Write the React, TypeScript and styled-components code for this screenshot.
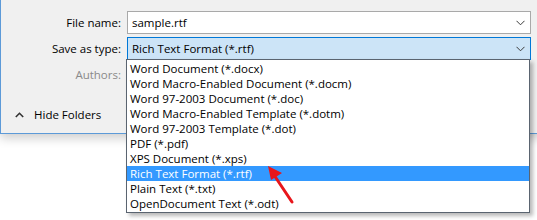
import React from "react"
import styled, { createGlobalStyle } from "styled-components"

const GlobalStyle = createGlobalStyle`
  html, body {
    margin: 0;
    padding: 0;
    background: #ffffff;
  }
  body {
    width: 537px;
    height: 220px;
    overflow: hidden;
    font-family: "Open Sans", "Noto Sans", sans-serif;
    font-size: 11.5px;
    color: #000;
  }
`

const Stage = styled.div`
  position: relative;
  width: 537px;
  height: 220px;
  overflow: hidden;
`

const Dialog = styled.div`
  width: 600px;
  height: 134px;
  background: #f0f0f0;
  border-left: 1px solid #5c9ad8;
  border-bottom: 1px solid #5c9ad8;
  box-shadow: 0 4px 10px rgba(0, 0, 0, 0.2);
  box-sizing: border-box;
  padding-top: 11px;
`

const Form = styled.div`
  display: grid;
  grid-template-columns: 120px 404px;
  column-gap: 6px;
  row-gap: 3px;
  grid-auto-rows: 23px;
`

const Label = styled.div<{ $disabled?: boolean }>`
  display: flex;
  align-items: center;
  justify-content: flex-end;
  color: ${(p) => (p.$disabled ? "#8a8a8a" : "#000")};
`

const Field = styled.div<{ $active?: boolean }>`
  display: flex;
  align-items: center;
  justify-content: space-between;
  box-sizing: border-box;
  height: 23px;
  padding: 0 5px 0 4px;
  border: 1px solid ${(p) => (p.$active ? "#0078d7" : "#a9a9a9")};
  background: ${(p) => (p.$active ? "#cce4f7" : "#ffffff")};
`

const FooterBar = styled.div`
  display: flex;
  align-items: center;
  gap: 10px;
  padding: 21px 0 0 14px;
`

const Chevron = styled.svg`
  display: block;
  flex: none;
`

const List = styled.ul`
  position: absolute;
  top: 59px;
  left: 126px;
  width: 404px;
  margin: 0;
  padding: 1px 0;
  list-style: none;
  box-sizing: border-box;
  background: #ffffff;
  border: 1px solid #5a6470;
  box-shadow: 3px 3px 4px rgba(0, 0, 0, 0.28);
`

const Option = styled.li<{ $selected?: boolean }>`
  height: 15px;
  line-height: 15px;
  padding-left: 3px;
  white-space: nowrap;
  background: ${(p) => (p.$selected ? "#3399ff" : "transparent")};
  color: ${(p) => (p.$selected ? "#ffffff" : "#000000")};
`

const Pointer = styled.svg`
  position: absolute;
  left: 258px;
  top: 158px;
`

const options = [
  "Word Document (*.docx)",
  "Word Macro-Enabled Document (*.docm)",
  "Word 97-2003 Document (*.doc)",
  "Word Macro-Enabled Template (*.dotm)",
  "Word 97-2003 Template (*.dot)",
  "PDF (*.pdf)",
  "XPS Document (*.xps)",
  "Rich Text Format (*.rtf)",
  "Plain Text (*.txt)",
  "OpenDocument Text (*.odt)",
]

function DownChevron() {
  return (
    <Chevron width="9" height="6" viewBox="0 0 9 6">
      <path d="M0.5 0.8 L4.5 4.8 L8.5 0.8" fill="none" stroke="#3a3a3a" strokeWidth="1" />
    </Chevron>
  )
}

export default function App() {
  return (
    <Stage>
      <GlobalStyle />
      <Dialog>
        <Form>
          <Label>File name:</Label>
          <Field>
            <span>sample.rtf</span>
            <DownChevron />
          </Field>
          <Label>Save as type:</Label>
          <Field $active>
            <span>Rich Text Format (*.rtf)</span>
            <DownChevron />
          </Field>
          <Label $disabled>Authors:</Label>
          <div />
        </Form>
        <FooterBar>
          <Chevron width="9" height="6" viewBox="0 0 9 6">
            <path d="M0.8 5 L4.5 1.3 L8.2 5" fill="none" stroke="#333" strokeWidth="1.6" />
          </Chevron>
          <span>Hide Folders</span>
        </FooterBar>
      </Dialog>

      <List>
        {options.map((o) => (
          <Option key={o} $selected={o === "Rich Text Format (*.rtf)"}>
            {o}
          </Option>
        ))}
      </List>

      <Pointer width="40" height="48" viewBox="0 0 40 48">
        <line x1="34" y1="44" x2="16" y2="17" stroke="#e8161b" strokeWidth="3" strokeLinecap="round" />
        <polygon points="10,8 24,15 13,22" fill="#e8161b" />
      </Pointer>
    </Stage>
  )
}
